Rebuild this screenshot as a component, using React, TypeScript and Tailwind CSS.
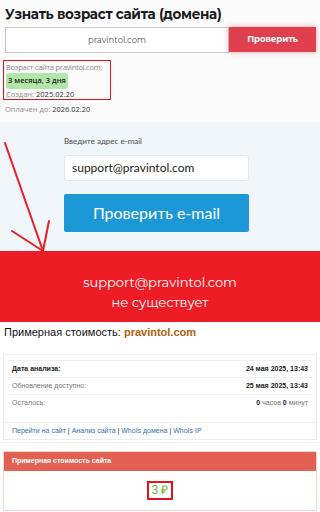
import React from "react";

export default function App() {
  return (
    <div className="relative w-[320px] h-[512px] overflow-hidden bg-white" style={{ fontFamily: "Arial, 'Liberation Sans', sans-serif" }}>
      {/* Section 1 */}
      <div className="h-[122px] bg-[#fbfbfb] px-[5px] pt-[3px]" style={{ fontFamily: "Montserrat, 'Open Sans', sans-serif" }}>
        <h1 className="text-[13.5px] leading-[22px] font-bold text-[#1a1a1a] tracking-[-0.3px]">Узнать возраст сайта (домена)</h1>
        <div className="mt-[2px] flex h-[26px] w-[311px]">
          <div className="flex h-full w-[224px] items-center justify-center border border-[#c8c8c8] bg-white text-[8.5px] text-[#555]">pravintol.com</div>
          <div className="flex h-[25px] w-[87px] items-center justify-center bg-[#e0404e] text-[8.5px] font-bold text-white shadow-[0_0_6px_rgba(224,64,78,0.45)]">Проверить</div>
        </div>
        <div className="mt-[7px] -ml-[2px] w-[108px] border-[1.5px] border-[#e0141e] px-[2px] pt-[1px] text-[7.5px]" style={{ fontFamily: "'Open Sans', sans-serif" }}>
          <div className="whitespace-nowrap leading-[10px] tracking-[-0.25px] text-[#8a8a8a]">Возраст сайта pravintol.com:</div>
          <div className="mt-[1px] flex h-[16px] w-fit items-center rounded-[3px] bg-[#b2e6a6] px-[2px] font-semibold text-[#222]">3 месяца, 3 дня</div>
          <div className="leading-[10px] text-[#8a8a8a]">Создан: <span className="text-[#333]">2025.02.20</span></div>
        </div>
        <div className="mt-[4px] text-[7.5px] leading-[10px] text-[#8a8a8a]" style={{ fontFamily: "'Open Sans', sans-serif" }}>Оплачен до: <span className="text-[#333]">2026.02.20</span></div>
      </div>

      {/* Section 2 */}
      <div className="h-[129px] bg-[#f0f6fa] pl-[64px] pt-[14px]" style={{ fontFamily: "Lato, 'Open Sans', sans-serif" }}>
        <div className="text-[8px] leading-[10px] text-[#4a4a4a]">Введите адрес e-mail</div>
        <div className="mt-[9px] flex h-[26px] w-[185px] items-center rounded-[3px] border border-[#e3e8ec] bg-white pl-[7px] text-[12px] text-[#222]">support@pravintol.com</div>
        <div className="mt-[13px] flex h-[38px] w-[185px] items-center justify-center rounded-[2px] bg-[#1d98d6] text-[16px] text-white">Проверить e-mail</div>
      </div>

      {/* Section 3 */}
      <div className="flex h-[71px] flex-col items-center bg-[#ee1c25] pt-[21px] text-[13px] leading-[20px] text-white" style={{ fontFamily: "Montserrat, 'Open Sans', sans-serif" }}>
        <div>support@pravintol.com</div>
        <div>не существует</div>
      </div>

      {/* Section 4 */}
      <div className="px-[4px] pt-[3px] text-[11px] leading-[14px] text-[#111]">
        Примерная стоимость: <span className="font-semibold text-[#b2600e]">pravintol.com</span>
      </div>

      <div className="mx-[3px] mt-[15px] border border-[#ececec] bg-white">
        <div className="px-[4px] pt-[5px]">
          <div className="border-t border-[#efefef] text-[7px]">
            <div className="flex h-[17px] items-center justify-between border-b border-[#efefef] px-[4px] font-bold text-[#222]">
              <span>Дата анализа:</span>
              <span>24 мая 2025, 13:43</span>
            </div>
            <div className="flex h-[17px] items-center justify-between border-b border-[#efefef] px-[4px] text-[#777]">
              <span>Обновление доступно:</span>
              <span className="font-bold text-[#222]">25 мая 2025, 13:43</span>
            </div>
            <div className="flex h-[17px] items-center justify-between px-[4px] text-[#777]">
              <span>Осталось:</span>
              <span><b className="text-[#222]">0</b> часов <b className="text-[#222]">0</b> минут</span>
            </div>
          </div>
        </div>
        <div className="mt-[10px] flex h-[17px] items-center border-t border-[#ececec] px-[8px] text-[7px] text-[#333]">
          <span className="text-[#3a6fa8]">Перейти на сайт</span>&nbsp;|&nbsp;<span className="text-[#3a6fa8]">Анализ сайта</span>&nbsp;|&nbsp;<span className="text-[#3a6fa8]">WhoIs домена</span>&nbsp;|&nbsp;<span className="text-[#3a6fa8]">WhoIs IP</span>
        </div>
      </div>

      <div className="mt-[2px] border-t border-[#efefef]"></div>

      <div className="mx-[3px] mt-[8px] border border-[#f2d6d2] bg-white">
        <div className="flex h-[19px] items-center bg-[#e26152] px-[8px] text-[7px] font-bold text-white">Примерная стоимость сайта</div>
        <div className="flex h-[39px] items-center justify-center">
          <div className="border-2 border-[#e0141e] px-[2px] text-[12px] leading-[15px] text-[#6cb830]">3 ₽</div>
        </div>
      </div>

      {/* Red arrow annotation */}
      <svg className="absolute left-0 top-0" width="320" height="512" viewBox="0 0 320 512">
        <g stroke="#ee1c25" strokeWidth="2" strokeLinecap="round" fill="none">
          <line x1="5" y1="143" x2="43" y2="251" />
          <line x1="12" y1="231" x2="43" y2="251" />
          <line x1="49" y1="221" x2="43" y2="251" />
        </g>
      </svg>
    </div>
  );
}
